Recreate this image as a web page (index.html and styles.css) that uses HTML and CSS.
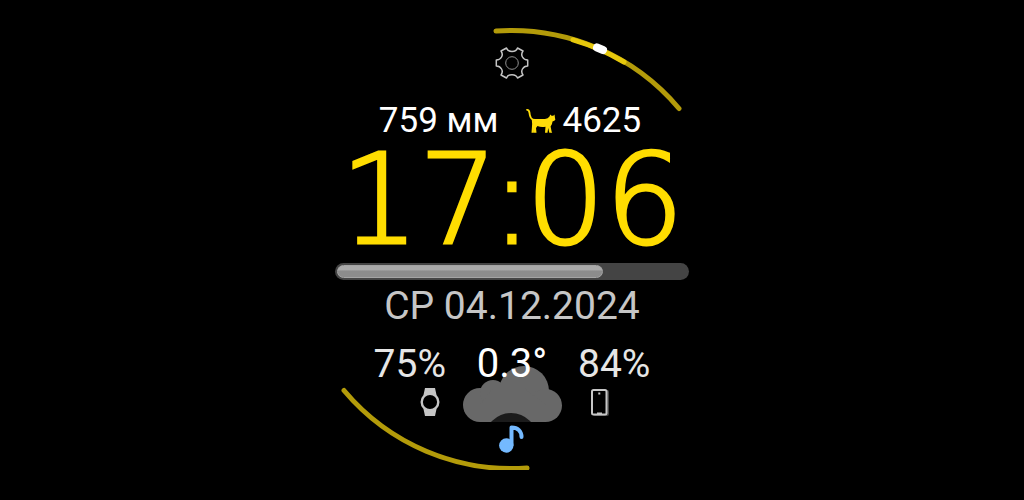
FILE: index.html
```html
<!DOCTYPE html>
<html lang="ru">
<head>
    <meta charset="UTF-8">
    <meta name="viewport" content="width=device-width, initial-scale=1.0">
    <title>Watch Face</title>
    <link rel="stylesheet" href="styles.css">
</head>
<body>

<main class="face">
    <!-- Outer arcs -->
    <svg class="arcs" viewBox="0 0 440 444" aria-hidden="true">
        <path class="arc" d="M204 1 A219 219 0 0 1 387 78.500"/>
        <path class="arc arc-bright" d="M281 9.800 A219 219 0 0 1 332 32"/>
        <path class="arc-mark" d="M305 17.500 L311 20"/>
        <path class="arc" d="M52 360.500 A219 219 0 0 0 235 438"/>
    </svg>

    <button class="icon-button" type="button" aria-label="Settings">
        <svg width="34" height="34" viewBox="0 0 34 34">
            <path class="gear" d="M11.500 2 C13 6.500 21 6.500 22.500 2 L28 5 C25 9 28 14 32.700 14 L32.700 20 C28 20 25 25 28 29 L22.500 32 C21 27.500 13 27.500 11.500 32 L6 29 C9 25 6 20 1.300 20 L1.300 14 C6 14 9 9 6 5 Z"/>
            <circle class="gear-hole" cx="17" cy="17" r="6.300"/>
        </svg>
    </button>

    <div class="stats">
        <span>759 мм</span>
        <span class="steps">
            <svg width="30" height="26" viewBox="0 0 30 26" aria-hidden="true">
                <path fill="#ffdd0a" d="M.3 1 Q3.500 .3 4.300 4 Q4.500 7.500 5.800 9.800 Q7 11.300 10 11 L19 11 Q22 10.500 23.500 8.500 L24.300 6.500 L25.500 7.800 L27.300 7.800 L28.500 6.600 L29 10 Q30 12 28.300 12.800 L26.500 13.500 Q26.300 16.500 24.600 18.500 L25.600 23.600 L26.200 24.800 L23.300 24.800 L22.200 20 L21.500 24.800 L19 24.800 L19.500 18.700 Q15 19.700 11.500 18 L10 20 L10.500 24.800 L8 24.800 L7.600 21 L7.900 24.800 L5.500 24.800 L5.900 19.500 Q6.500 17 5.800 12 Q3 9.800 2.600 5 Q2.300 2 .3 2.500 Z"/>
            </svg>
            4625
        </span>
    </div>

    <time class="clock" datetime="17:06"><span>17</span><span class="colon">:</span><span>06</span></time>

    <progress class="day-bar" value="76" max="100" aria-label="Day progress"></progress>

    <div class="date">СР 04.12.2024</div>

    <div class="bottom">
        <div class="battery watch">
            <span>75%</span>
            <svg width="22" height="30" viewBox="0 0 22 30" aria-hidden="true">
                <path fill="#c6c6c6" d="M6 0 L16 0 L17.500 7 L4.500 7 Z M4.500 21 L17.500 21 L16 28 L6 28 Z"/>
                <circle cx="11" cy="14" r="8.300" fill="#000" stroke="#c6c6c6" stroke-width="2.400"/>
            </svg>
        </div>
        <div class="weather">
            <svg class="cloud" width="100" height="56" viewBox="0 0 100 56" aria-hidden="true">
                <g fill="#686868">
                    <circle cx="17" cy="39" r="17"/>
                    <circle cx="30" cy="27" r="13"/>
                    <circle cx="61" cy="25" r="25"/>
                    <circle cx="82.500" cy="39.500" r="16.500"/>
                    <path d="M17 56 L17 39 L30 22 L61 22 L82.500 39 L82.500 56 Z"/>
                </g>
                <circle cx="48" cy="73.500" r="26.500" fill="#1b1b1b"/>
            </svg>
            <span>0.3°</span>
        </div>
        <div class="battery phone">
            <span>84%</span>
            <svg width="20" height="30" viewBox="0 0 20 30" aria-hidden="true">
                <rect x="3" y="2" width="16" height="26" rx="2" fill="#444"/>
                <rect x="2" y="2" width="14.500" height="24.500" rx="1.500" fill="#000" stroke="#c6c6c6" stroke-width="2"/>
                <path stroke="#c6c6c6" stroke-width="2" d="M8.300 5.500 L10.300 5.500 M7 25.500 L12 25.500"/>
            </svg>
        </div>
    </div>

    <button class="icon-button music" type="button" aria-label="Music">
        <svg width="28" height="30" viewBox="0 0 28 30">
            <circle cx="8.300" cy="21.500" r="7.200" fill="#74b9ff"/>
            <path fill="none" stroke="#74b9ff" stroke-width="4" stroke-linecap="round" stroke-linejoin="round" d="M13.500 21 L13.500 3.500 C20 3.500 23.500 7.500 23.500 13"/>
        </svg>
    </button>
</main>

</body>
</html>
```
FILE: styles.css
```css
* {
    box-sizing: border-box;
}
body {
    margin: 0;
    background-color: #000;
    color: #fff;
    font-family: Roboto, sans-serif;
}
.face {
    position: relative;
    display: flex;
    flex-direction: column;
    align-items: center;
    max-width: 440px;
    margin: 0 auto;
    padding: 46px 0 16px;
}
.arcs {
    position: absolute;
    top: 30px;
    left: 0;
    width: 100%;
    overflow: visible;
    pointer-events: none;
}
.arc {
    fill: none;
    stroke: #b39b0a;
    stroke-width: 5;
    stroke-linecap: round;
}
.arc-bright {
    stroke: #e6c80c;
}
.arc-mark {
    stroke: #fff;
    stroke-width: 8;
    stroke-linecap: round;
}
.icon-button {
    padding: 0;
    border: none;
    background: none;
    cursor: pointer;
}
.icon-button svg, .steps svg, .battery svg {
    display: block;
}
.gear {
    fill: none;
    stroke: #c4c4c4;
    stroke-width: 1.5;
    stroke-linejoin: round;
}
.gear-hole {
    fill: none;
    stroke: #909090;
}
.stats {
    display: flex;
    gap: 28px;
    margin-top: 20px;
    padding-right: 4px;
    font-size: 35px;
    line-height: 42px;
}
.steps {
    display: flex;
    align-items: center;
    gap: 6px;
}
.clock {
    display: flex;
    margin-top: 2px;
    color: #fd0;
    font-family: "DejaVu Sans Light", "DejaVu Sans", sans-serif;
    font-size: 124px;
    font-weight: 200;
    line-height: 112px;
    -webkit-text-stroke: 3px #fd0;
}
.colon {
    display: flex;
    justify-content: center;
    width: 28px;
}
.day-bar {
    appearance: none;
    display: block;
    width: 354px;
    max-width: 100%;
    height: 17px;
    margin-top: 7px;
    padding: 2px;
    border: none;
    border-radius: 9px;
    background-color: #444;
    overflow: hidden;
}
.day-bar::-webkit-progress-bar {
    background: none;
}
.day-bar::-webkit-progress-value {
    border: 1px solid #a4a4a4;
    border-radius: 7px;
    background: linear-gradient(#aaa 35%, #8c8c8c 45%);
}
.date {
    color: #c6c6c6;
    font-size: 39px;
    line-height: 52px;
}
.bottom {
    display: grid;
    grid-template-columns: 74px 132px 74px;
    margin-top: 8px;
    font-size: 40px;
    line-height: 48px;
}
.battery {
    display: flex;
    flex-direction: column;
    color: #e6e6e6;
    font-size: 39px;
}
.watch {
    align-items: flex-end;
}
.watch svg {
    margin-right: 5px;
}
.phone svg {
    margin-left: 12px;
}
.weather {
    position: relative;
    text-align: center;
}
.weather span {
    position: relative;
}
.cloud {
    position: absolute;
    top: 26px;
    left: 17px;
}
.music {
    margin-top: 6px;
}
```
